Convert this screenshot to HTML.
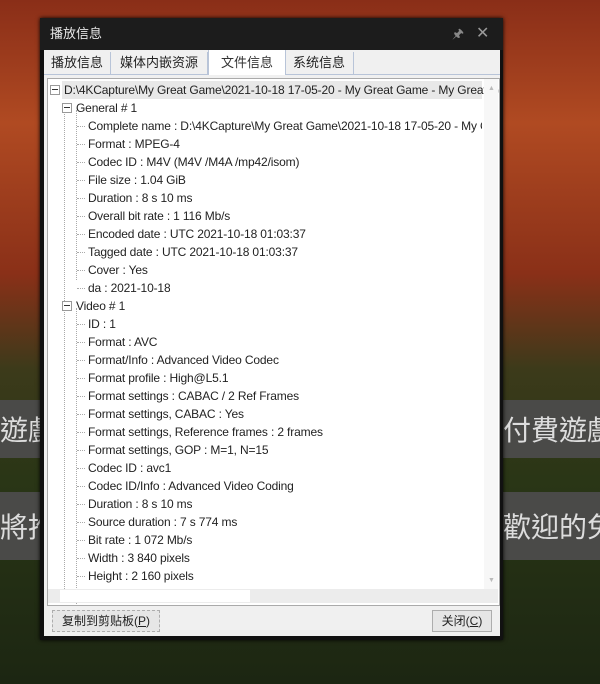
<!DOCTYPE html><html><head><meta charset="utf-8"><style>
body{margin:0;width:600px;height:684px;overflow:hidden;position:relative;font-family:"Liberation Sans","Noto Sans CJK SC",sans-serif;
background:linear-gradient(180deg,#8a2e18 0%,#b04a22 18%,#8a3018 40%,#3c3a1a 54%,#2a3616 70%,#1c2612 100%);}
.sub{position:absolute;background:#4a4a48;color:#ddd;font-size:28px;line-height:58px;font-family:"Noto Sans CJK TC",sans-serif;white-space:nowrap;overflow:hidden}
#win{position:absolute;left:40px;top:18px;width:463px;height:622px;background:#111;box-shadow:0 0 4px #000}
#title{position:absolute;left:0;top:0;width:463px;height:32px;background:#1c1c1c;color:#e8e8e8;font-size:13px;line-height:32px}
#client{position:absolute;left:4px;top:32px;width:456px;height:586px;background:#f0f0f0}
.tab{position:absolute;top:2px;height:22px;line-height:22px;font-size:13px;color:#222;border-right:1px solid #b8c4d8;text-align:center}
#tree{position:absolute;left:3px;top:28px;width:451px;height:526px;background:#fff;border:1px solid #aaa;overflow:hidden}
.r{position:absolute;font-size:12px;letter-spacing:-0.15px;color:#222;white-space:nowrap;height:18px;line-height:18px}
.bx{position:absolute;width:8px;height:8px;border:1px solid #999;background:#fff}
.bx:after{content:"";position:absolute;left:1px;top:3px;width:6px;height:1px;background:#333}
.btn{position:absolute;top:560px;height:20px;background:#e6e6e6;border:1px solid #adadad;font-size:12px;line-height:20px;text-align:center;color:#222}
</style></head><body>
<div class="sub" style="left:0;top:400px;width:40px">遊戲</div>
<div class="sub" style="left:503px;top:400px;width:97px">付費遊戲</div>
<div class="sub" style="left:0;top:492px;width:40px;height:68px;line-height:68px">將推</div>
<div class="sub" style="left:503px;top:492px;width:97px;height:68px;line-height:68px">歡迎的免</div>
<div id="win">
<div id="title"><span style="margin-left:10px">播放信息</span><span style="position:absolute;left:412px;color:#888">🖈</span><span style="position:absolute;left:436px;color:#999;font-size:16px">✕</span></div>
<div id="client">
<div style="position:absolute;left:0;top:24px;width:456px;height:1px;background:#b8c4d8"></div>
<div class="tab" style="left:0;width:66px">播放信息</div>
<div class="tab" style="left:67px;width:96px">媒体内嵌资源</div>
<div class="tab" style="left:164px;width:76px;background:#fff;top:0;height:25px;border-left:1px solid #b8c4d8;color:#333;line-height:26px">文件信息</div>
<div class="tab" style="left:241px;width:68px">系统信息</div>
<div id="tree">
<div style="position:absolute;left:16px;top:24px;width:0;height:500px;border-left:1px dotted #aaa"></div>
<div style="position:absolute;left:28px;top:31px;width:0;height:170px;border-left:1px dotted #aaa"></div>
<div style="position:absolute;left:28px;top:229px;width:0;height:300px;border-left:1px dotted #aaa"></div>
<div style="position:absolute;left:14px;top:2px;width:420px;height:18px;background:#e8e8e8"></div>
<div class="bx" style="left:2px;top:6px"></div><div class="r" style="left:16px;top:2px">D:\4KCapture\My Great Game\2021-10-18 17-05-20 - My Great Game - My Great G</div>
<div class="bx" style="left:14px;top:24px"></div><div class="r" style="left:28px;top:20px">General # 1</div>
<div id="g"></div>
<div class="bx" style="left:14px;top:222px"></div><div class="r" style="left:28px;top:218px">Video # 1</div>
<div style="position:absolute;left:436px;top:0;width:14px;height:510px;background:#f7f7f7"></div>
<div style="position:absolute;left:440px;top:6px;color:#bbb;font-size:7px">▲</div>
<div style="position:absolute;left:440px;top:498px;color:#bbb;font-size:7px">▼</div>
<div style="position:absolute;left:0;top:510px;width:450px;height:14px;background:#ececec"></div>
<div style="position:absolute;left:12px;top:511px;width:190px;height:12px;background:#fff"></div>
</div>
<div class="btn" style="left:8px;width:106px;border-style:dashed">复制到剪贴板(<u>P</u>)</div>
<div class="btn" style="left:388px;width:58px">关闭(<u>C</u>)</div>
</div></div>
<script>
var a=["Complete name : D:\\4KCapture\\My Great Game\\2021-10-18 17-05-20 - My Great Game","Format : MPEG-4","Codec ID : M4V  (M4V /M4A /mp42/isom)","File size : 1.04 GiB","Duration : 8 s 10 ms","Overall bit rate : 1 116 Mb/s","Encoded date : UTC 2021-10-18 01:03:37","Tagged date : UTC 2021-10-18 01:03:37","Cover : Yes","da : 2021-10-18"];
var b=["ID : 1","Format : AVC","Format/Info : Advanced Video Codec","Format profile : High@L5.1","Format settings : CABAC / 2 Ref Frames","Format settings, CABAC : Yes","Format settings, Reference frames : 2 frames","Format settings, GOP : M=1, N=15","Codec ID : avc1","Codec ID/Info : Advanced Video Coding","Duration : 8 s 10 ms","Source duration : 7 s 774 ms","Bit rate : 1 072 Mb/s","Width : 3 840 pixels","Height : 2 160 pixels"];
var h="";function add(l,t){l.forEach(function(s,i){var y=t+i*18;h+='<div style="position:absolute;left:29px;top:'+(y+9)+'px;width:8px;border-top:1px dotted #aaa"></div><div class="r" style="left:40px;top:'+y+'px;max-width:394px;overflow:hidden">'+s.replace(/&/g,"&amp;")+'</div>';});}
add(a,38);add(b,236);document.getElementById("g").outerHTML=h;
</script>
</body></html>
